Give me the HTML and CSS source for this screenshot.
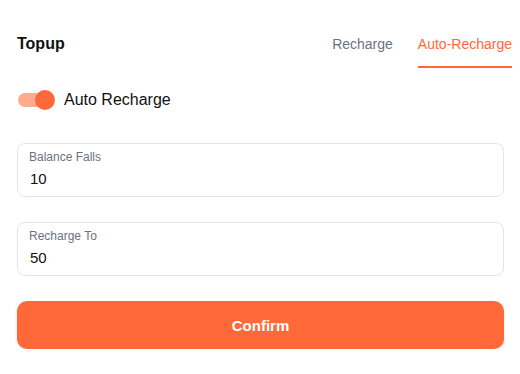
FILE: index.html
```html
<!DOCTYPE html>
<html lang="en">
  <head>
    <meta charset="UTF-8">
    <title>Topup</title>
    <link rel="stylesheet" href="styles.css">
  </head>
  <body>
    <div class="topup">
      <div class="header">
        <h1>Topup</h1>
        <div class="tabs">
          <div class="tab">Recharge</div>
          <div class="tab active">Auto-Recharge</div>
        </div>
      </div>

      <label class="switch-row">
        <span class="switch"><span class="knob"></span></span>
        <span class="switch-label">Auto Recharge</span>
      </label>

      <div class="field">
        <div class="field-label">Balance Falls</div>
        <div class="field-value">10</div>
      </div>

      <div class="field">
        <div class="field-label">Recharge To</div>
        <div class="field-value">50</div>
      </div>

      <button class="confirm">Confirm</button>
    </div>
  </body>
</html>
```

FILE: styles.css
```css
body {
  margin: 0;
  font-family: "Liberation Sans", Arial, sans-serif;
  background-color: #ffffff;
  color: #111111;
}

.topup {
  width: 487px;
  padding: 0 17px;
  display: flex;
  flex-direction: column;
}

.header {
  display: flex;
  align-items: center;
  justify-content: space-between;
  height: 48px;
  margin-top: 20px;
  margin-right: -8px;
}

h1 {
  margin: 0;
  font-size: 16px;
  font-weight: bold;
}

.tabs {
  display: flex;
  gap: 25px;
  height: 48px;
}

.tab {
  display: flex;
  align-items: center;
  font-size: 14px;
  color: #6b7280;
  border-bottom: 2px solid transparent;
  box-sizing: border-box;
  padding-top: 2px;
}

.tab.active {
  color: #ff6838;
  border-bottom-color: #ff6838;
}

.switch-row {
  display: flex;
  align-items: center;
  gap: 10px;
  margin-top: 21px;
  height: 22px;
}

.switch {
  position: relative;
  width: 31px;
  height: 14px;
  margin-left: 1px;
  border-radius: 7px;
  background-color: #ffab90;
}

.knob {
  position: absolute;
  top: -3px;
  right: -6px;
  width: 20px;
  height: 20px;
  border-radius: 50%;
  background-color: #ff6838;
}

.switch-label {
  font-size: 16px;
  margin-left: 5px;
}

.field {
  height: 54px;
  box-sizing: border-box;
  border: 1px solid #e5e5e5;
  border-radius: 8px;
  padding: 6px 11px 0;
  margin-top: 32px;
}

.field + .field {
  margin-top: 25px;
}

.field-label {
  font-size: 12px;
  color: #6b7280;
}

.field-value {
  font-size: 15px;
  margin-top: 6px;
  padding-left: 1px;
}

.confirm {
  margin-top: 25px;
  height: 48px;
  border: none;
  border-radius: 10px;
  background-color: #ff6838;
  color: #ffffff;
  font-family: "Liberation Sans", Arial, sans-serif;
  font-size: 15px;
  font-weight: bold;
  box-shadow: 0 1px 3px rgba(0, 0, 0, 0.12);
  cursor: pointer;
}
```
